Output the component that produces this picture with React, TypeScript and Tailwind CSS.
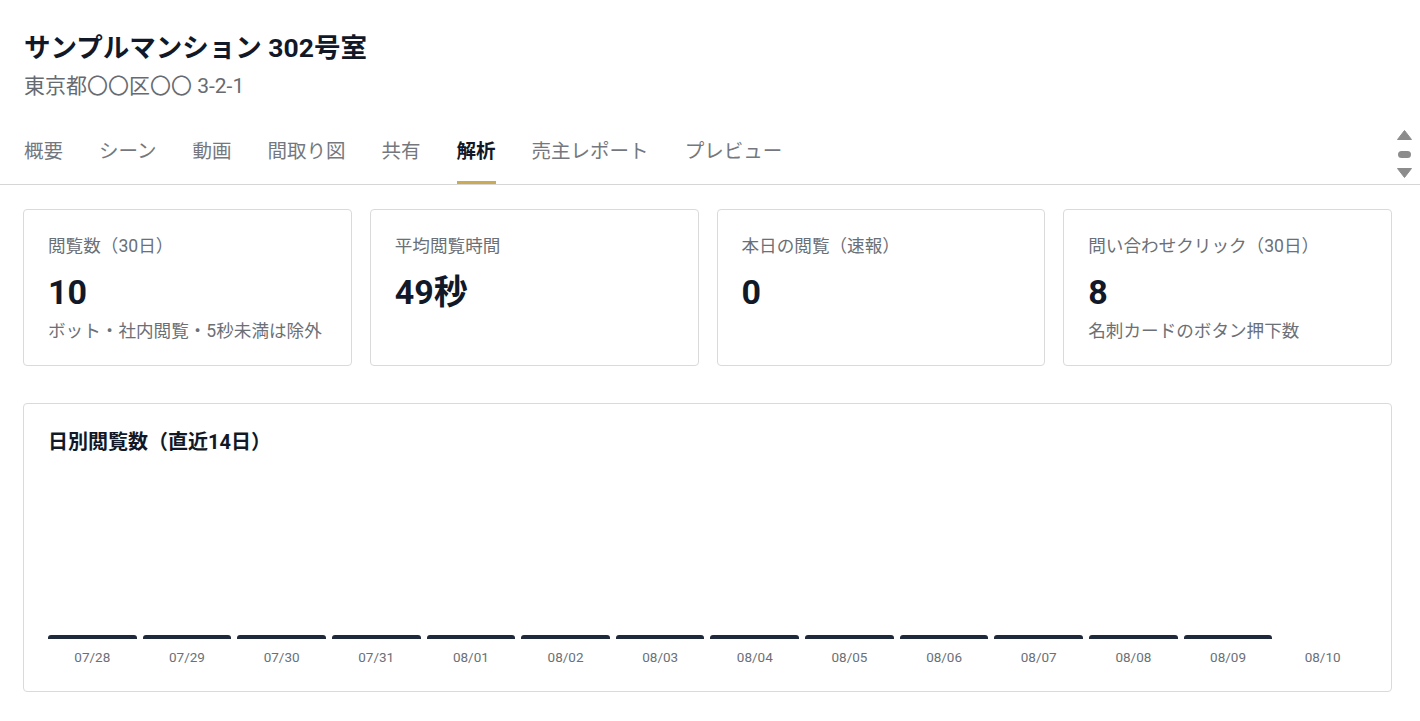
import React from 'react'

const tabs = ['概要', 'シーン', '動画', '間取り図', '共有', '解析', '売主レポート', 'プレビュー']

const stats = [
  { label: '閲覧数（30日）', value: '10', note: 'ボット・社内閲覧・5秒未満は除外' },
  { label: '平均閲覧時間', value: '49秒', note: '' },
  { label: '本日の閲覧（速報）', value: '0', note: '' },
  { label: '問い合わせクリック（30日）', value: '8', note: '名刺カードのボタン押下数' },
]

// 直近14日（最終日は本日分で未集計）
const days = [
  { date: '07/28', views: 1 },
  { date: '07/29', views: 1 },
  { date: '07/30', views: 1 },
  { date: '07/31', views: 1 },
  { date: '08/01', views: 1 },
  { date: '08/02', views: 1 },
  { date: '08/03', views: 1 },
  { date: '08/04', views: 1 },
  { date: '08/05', views: 1 },
  { date: '08/06', views: 1 },
  { date: '08/07', views: 1 },
  { date: '08/08', views: 1 },
  { date: '08/09', views: 1 },
  { date: '08/10', views: 0 },
]

function ScrollArrows() {
  return (
    <div className="absolute right-[8px] top-[130px] flex flex-col items-center">
      <svg width="15" height="10" viewBox="0 0 15 10">
        <path d="M7.5 0.5 L14.5 9.5 L0.5 9.5 Z" fill="#8c8c8c" strokeLinejoin="round" stroke="#8c8c8c" strokeWidth="1" />
      </svg>
      <div className="mt-[11px] h-[7px] w-[13px] rounded-full bg-[#8c8c8c]" />
      <svg width="15" height="10" viewBox="0 0 15 10" className="mt-[10px]">
        <path d="M0.5 0.5 L14.5 0.5 L7.5 9.5 Z" fill="#8c8c8c" strokeLinejoin="round" stroke="#8c8c8c" strokeWidth="1" />
      </svg>
    </div>
  )
}

export default function App() {
  return (
    <div className="relative min-h-screen bg-white text-[#111827]" style={{ fontFamily: 'Roboto, "Noto Sans CJK JP", sans-serif' }}>
      {/* Header */}
      <div className="pl-6 pr-7 pt-[30px]">
        <h1 className="text-[26.5px] font-bold leading-9">サンプルマンション 302号室</h1>
        <p className="mt-[6px] text-[21px] leading-7 text-[#666b72]">東京都〇〇区〇〇 3-2-1</p>
      </div>

      {/* Tabs */}
      <div className="mt-[38px] border-b border-[#d6d6d6]">
        <nav className="flex gap-[36px] pl-6">
          {tabs.map((tab) => (
            <div
              key={tab}
              className={
                tab === '解析'
                  ? 'border-b-[3px] border-[#c9aa55] pb-[15px] text-[19.5px] font-bold leading-7 text-[#111827]'
                  : 'border-b-[3px] border-transparent pb-[15px] text-[19.5px] leading-7 text-[#74787e]'
              }
            >
              {tab}
            </div>
          ))}
        </nav>
      </div>
      <ScrollArrows />

      <div className="pl-[23px] pr-7">
        {/* Stat cards */}
        <div className="mt-6 grid grid-cols-4 gap-[18px]">
          {stats.map((s) => (
            <div key={s.label} className="rounded border border-[#dadada] px-6 pt-6 pb-[22px]">
              <div className="text-[17.6px] leading-6 text-[#6b7077]">{s.label}</div>
              <div className="mt-[14px] text-[34px] font-bold leading-10 text-[#111827]">{s.value}</div>
              {s.note && <div className="mt-[7px] whitespace-nowrap text-[17.6px] leading-6 text-[#6b7077]">{s.note}</div>}
            </div>
          ))}
        </div>

        {/* Daily chart */}
        <div className="mt-[37px] rounded border border-[#dadada] p-6">
          <h2 className="text-[20px] font-bold leading-7 text-[#111827]">日別閲覧数（直近14日）</h2>
          <div className="mt-6 flex h-[159px] items-end gap-[6px]">
            {days.map((d) => (
              <div key={d.date} className="flex flex-1 items-end">
                {d.views > 0 && <div className="h-[4px] w-full rounded-t-[3px] bg-[#1e293b]" />}
              </div>
            ))}
          </div>
          <div className="mt-2 flex gap-[6px]">
            {days.map((d) => (
              <div key={d.date} className="flex-1 text-center text-[13.5px] leading-5 text-[#6b7077]">
                {d.date}
              </div>
            ))}
          </div>
        </div>
      </div>
    </div>
  )
}
